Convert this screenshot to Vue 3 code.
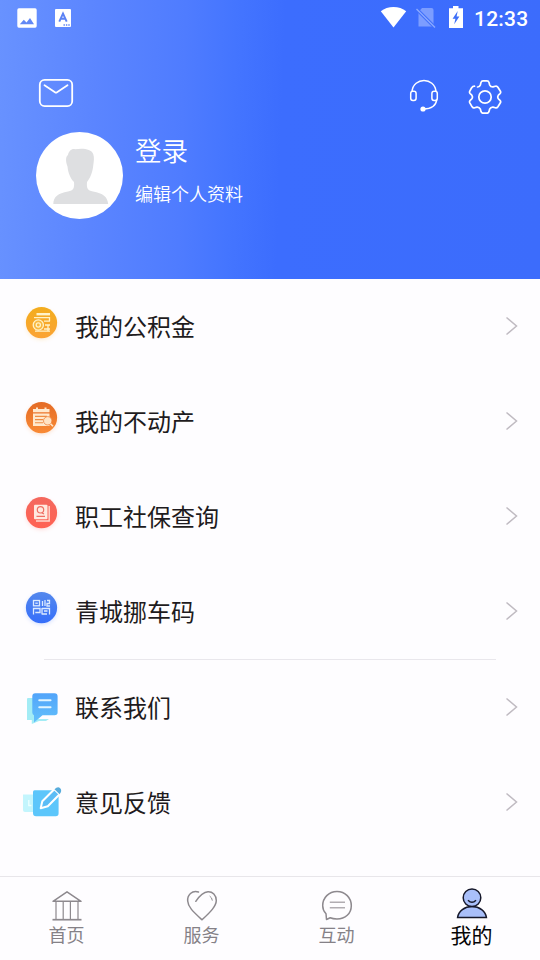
<script setup>
const services = [
  { icon: 'fund', label: '我的公积金' },
  { icon: 'estate', label: '我的不动产' },
  { icon: 'social', label: '职工社保查询' },
  { icon: 'qr', label: '青城挪车码' },
]
const support = [
  { icon: 'contact', label: '联系我们' },
  { icon: 'feedback', label: '意见反馈' },
]
const groups = [services, support]
const tabs = [
  { icon: 'home', label: '首页' },
  { icon: 'service', label: '服务' },
  { icon: 'chat', label: '互动' },
  { icon: 'mine', label: '我的', active: true },
]
</script>

<template>
  <div class="screen">
    <header class="hero">
      <div class="status">
        <svg class="status-left" width="60" height="36" viewBox="0 0 60 36">
          <rect x="1.3" y="8.3" width="19.4" height="19.4" rx="1.6" fill="#fff" />
          <path d="M3.8 24.3 7.8 19.8 10.5 22.5 14 18 18 24.3Z" fill="#6288f5" />
          <rect x="39" y="9" width="16" height="18" rx="1" fill="#fff" />
          <path d="M43.3 21.7 47 13.5 50.7 21.7M44.8 18.8H49.2" fill="none" stroke="#5b82f4" stroke-width="1.9" />
          <path d="M47.5 25H54" stroke="#5b82f4" stroke-width="1.3" stroke-dasharray="1.4 1" />
        </svg>
        <svg class="status-right" width="86" height="36" viewBox="380 0 86 36">
          <path d="M380.8 11.3C387.5 5.6 399.5 5.6 406.2 11.3L393.5 27.6Z" fill="#fff" />
          <path d="M422 8H431.5Q433.5 8 433.5 10V26.5H418.5V12Z" fill="#7c9dff" />
          <path d="M416.5 9 435 27.5" stroke="#3c6dfc" stroke-width="3.2" />
          <path d="M416.5 9 435 27.5" stroke="#8ba8ff" stroke-width="1.5" />
          <path d="M449 8.2H453V6H458.5V8.2H463V28H449Z" fill="#fff" />
          <path d="M457.7 11 452.6 18.7H455.4L454.2 24.3 459.4 16.6H456.6Z" fill="#3d6ff8" />
        </svg>
        <span class="clock">12:33</span>
      </div>
      <div class="tools">
        <svg width="36" height="36" viewBox="38 78 36 36" fill="none" stroke="#fff" stroke-width="1.8" stroke-linecap="round" stroke-linejoin="round">
          <rect x="39.8" y="79.9" width="32.4" height="26.2" rx="4.8" />
          <path d="M44.5 85.3 55 92.3Q56 93 57 92.3L67.5 85.3" />
        </svg>
        <span class="spacer"></span>
        <svg class="headset" width="32" height="36" viewBox="408 78 32 36" fill="none" stroke="#fff" stroke-width="1.5">
          <path d="M412 91.5C413.5 76.8 434.5 76.8 436 91.5" />
          <path d="M436.8 99.5C436 105.5 431 109 423.5 109" />
          <rect x="410.7" y="91.2" width="5.4" height="9.2" rx="2.2" />
          <rect x="431.9" y="91.2" width="5.4" height="9.2" rx="2.2" />
          <circle cx="423" cy="109" r="2.6" fill="#fff" stroke="none" />
        </svg>
        <svg width="36" height="36" viewBox="467 78 36 36" fill="none" stroke="#fff" stroke-width="1.7" stroke-linejoin="round" stroke-linecap="round">
          <path d="M477.5 87Q479.4 87.2 480.4 84.8L481 82.4Q481.5 80.8 483 80.8H487Q488.5 80.8 489 82.4L489.6 84.8Q490.7 87.1 493 86.9L495.3 86.2Q496.9 85.7 497.9 87.2L500.4 91.2Q501.1 92.6 500 93.7L498.4 95.2Q497.1 97 498.4 98.8L500 100.3Q501.1 101.4 500.4 102.8L497.9 106.8Q496.9 108.3 495.3 107.8L493 107.1Q490.7 106.9 489.6 109.2L489 111.6Q488.5 113.2 487 113.2H483Q481.5 113.2 481 111.6L480.4 109.2Q479.3 106.9 477 107.1L474.7 107.8Q473.1 108.3 472.1 106.8L469.8 102.8Q469.1 101.4 470.2 100.3L471.8 98.8Q473.1 97 471.8 95.2L470.2 93.7Q469.1 92.6 469.8 91.2L471.5 88Q472.7 86.2 474.5 86.2" />
          <circle cx="485" cy="97" r="6.2" />
        </svg>
      </div>
      <div class="profile">
        <svg class="avatar" width="87" height="87" viewBox="0 0 87 87">
          <circle cx="43.5" cy="43.5" r="43.5" fill="#fff" />
          <path d="M17.3 72C17.5 64.5 22 61.5 32 59.5 37.5 58.3 38.5 56.5 38 50 34 46 32 40 31.5 34.5 29.5 29 29.5 25 32 23 32.5 19.5 35.5 16.5 39 17.2 46 16 55.5 16.5 57.2 22 58.5 26 57.8 29 57.3 33 56.8 40 54 46.5 51 50 50.5 56.5 51.5 58.3 57 59.5 67 61.5 71.5 64.5 72.2 72Z" fill="#dedfe1" />
        </svg>
        <div class="who">
          <div class="login">登录</div>
          <div class="edit">编辑个人资料</div>
        </div>
      </div>
    </header>

    <main class="menu">
      <section v-for="(group, g) in groups" :key="g" class="group">
        <div v-for="item in group" :key="item.icon" class="row">
          <svg class="row-icon" width="66" height="95" viewBox="0 0 66 95">
            <defs>
              <linearGradient id="g-fund" x2="0" y2="1"><stop stop-color="#f3ad1e" /><stop offset="1" stop-color="#fba334" /></linearGradient>
              <linearGradient id="g-estate" x2="0" y2="1"><stop stop-color="#e46b25" /><stop offset="1" stop-color="#f98a35" /></linearGradient>
              <linearGradient id="g-social" x2="0" y2="1"><stop stop-color="#f4685e" /><stop offset="1" stop-color="#ff6253" /></linearGradient>
              <linearGradient id="g-qr" x2="0" y2="1"><stop stop-color="#5488ed" /><stop offset="1" stop-color="#356efa" /></linearGradient>
              <linearGradient id="g-blue" x2="0" y2="1"><stop stop-color="#52a4fa" /><stop offset="1" stop-color="#62c0fb" /></linearGradient>
            </defs>
            <template v-if="g === 0">
              <circle class="glow" :class="item.icon" cx="41.5" cy="45.2" r="15.3" />
              <circle cx="41.5" cy="43.7" r="15.6" :fill="`url(#g-${item.icon})`" />
            </template>
            <g v-if="item.icon === 'fund'" fill="none" stroke="#fff2c8" stroke-width="1.3">
              <path d="M36.5 35.2H50" stroke-width="2.4" />
              <path d="M34 38.7H49.5V42.2M44 42.2H50M45 46H50M44 50H50M35 52.2H50M48 46V52" />
              <circle cx="38.3" cy="46" r="5.1" fill="#f9b83e" />
              <circle cx="38.3" cy="46" r="2.1" />
            </g>
            <g v-else-if="item.icon === 'estate'">
              <path d="M33 35H36V33.5H38V35H44.5V33.5H46.5V35H49.5V38.2H33ZM33 39.5H49.5V52H33Z" fill="#ffe8cd" />
              <path d="M35 42.4H47M35 45.6H43M35 48.8H43" stroke="#ef8c43" stroke-width="1.1" />
              <circle cx="47.7" cy="46.8" r="4.2" fill="#ffe3c4" stroke="#ef8038" stroke-width=".8" />
              <path d="M50.5 49.7 53 52.3" stroke="#ffe8cd" stroke-width="1.6" />
            </g>
            <g v-else-if="item.icon === 'social'">
              <path d="M49.2 37V52H36" fill="none" stroke="#ffd9cf" stroke-width="1.4" />
              <rect x="34" y="35.7" width="13.5" height="14.6" rx="1" fill="#ffe9df" />
              <circle cx="40.5" cy="40.8" r="3.2" fill="none" stroke="#ef6e62" stroke-width="1.2" />
              <path d="M36.5 47.4H45M41.8 43.7 44 45" stroke="#ef6e62" stroke-width="1.2" />
            </g>
            <g v-else-if="item.icon === 'qr'" fill="none" stroke="#dceaff" stroke-width="1.3">
              <rect x="33.5" y="36.5" width="6" height="5.3" /><path d="M35.3 39.2H37.8" />
              <path d="M42.5 37V42M45 36V42M47 36.5H49.5V39.5H47V42H50" />
              <path d="M33.5 50.5V44.5H40V48.5H35.3M42 44.5H49.5V50.5M42 44V50.5M44 47H47.5M42 50H47" />
            </g>
            <g v-else-if="item.icon === 'contact'">
              <path d="M27 39Q27 38 28 38H34V59H49L46 61H39L31.8 64V60H27Z" fill="#a3ecf5" />
              <path d="M35.3 33.2H54.5Q57.6 33.2 57.6 36.2V52.5Q57.6 55.3 54.5 55.3H42.5L34 62.5V55.3Q32.3 54.8 32.3 52.5V36.2Q32.3 33.2 35.3 33.2Z" fill="url(#g-blue)" />
              <path d="M39.3 40.2H50.5M39.3 47.2H50.5" stroke="#e1f5ff" stroke-width="2.1" stroke-linecap="round" />
            </g>
            <g v-else>
              <path d="M23 39.5H34V57H25Q23 57 23 55Z" fill="#c3f5fd" />
              <path d="M28.8 45V50.5H31.5" fill="none" stroke="#eeffff" stroke-width="1.3" />
              <path d="M34.5 35.2H58.6V58Q58.6 61.3 55.8 61.3H36Q33 61.3 33 58V37Q33 35.2 34.5 35.2Z" fill="#5cc6fb" />
              <path d="M40.7 53.3 42.3 46.3 54.3 34.2 59.6 39.2 47.8 51.3Z" fill="#5bbdf6" stroke="#fff" stroke-width="2" stroke-linejoin="round" />
              <path d="M54.5 34.3Q57.8 30.8 60.2 33.2 62.5 35.8 59.6 39.2Z" fill="#58acdc" />
            </g>
          </svg>
          <span class="label">{{ item.label }}</span>
          <svg class="chevron" width="14" height="20" viewBox="0 0 14 20">
            <path d="M1.5 1.5 11.5 10 1.5 18.5" fill="none" stroke="#c0bbc2" stroke-width="1.5" />
          </svg>
        </div>
      </section>
    </main>

    <nav class="tabs">
      <div v-for="tab in tabs" :key="tab.icon" class="tab" :class="{ active: tab.active }">
        <svg width="36" height="36" viewBox="0 0 36 36" fill="none" stroke="#8d898e" stroke-width="1.5">
          <g v-if="tab.icon === 'home'">
            <path d="M4 14.3 18 4.8 32 14.3Z" stroke-linejoin="round" />
            <path d="M3.5 32.7H32.5" stroke-width="1.7" />
            <path d="M7 15V32M14.2 15V32M21.4 15V32M29 15V32" stroke-width="1.2" />
          </g>
          <g v-else-if="tab.icon === 'service'" stroke-linecap="round">
            <path d="M14.5 5C8 3 3.2 8 3.7 14 4 20 9 24.5 18 32.8 27 24.5 32.2 19 32.3 13.5 32.3 8 28.5 4.5 24 4.7 19 5 16 8 11.8 14.3" />
            <path d="M26 9.3Q28 10.5 28.3 13.2" stroke-width="1" />
          </g>
          <g v-else-if="tab.icon === 'chat'" stroke-linejoin="round">
            <path d="M7.5 32.5 7 26.8C4.8 24.5 3.7 21.5 3.7 18.7 3.7 10.8 9.8 4.5 18 4.5S32.3 10.8 32.3 18.7 26.3 32 18 32C15.2 32 13 31.6 11.2 30.8Z" />
            <path d="M10.8 15.2H26M10.8 20.7H26" stroke="#b1adb2" />
          </g>
          <g v-else stroke="#16182b" stroke-width="1.5">
            <path d="M3.6 30.4C4.5 24 10.5 19.6 18 19.6S31.5 24 32.4 30.4Z" fill="#a9bffa" />
            <circle cx="18" cy="10.7" r="8.8" fill="#a9bffa" />
            <path d="M14 13.2Q18 17.4 22 13.2" />
          </g>
        </svg>
        <span>{{ tab.label }}</span>
      </div>
    </nav>
  </div>
</template>

<style>
body {
  margin: 0;
  background: #fefdff;
}
</style>

<style scoped>
.screen {
  display: flex;
  flex-direction: column;
  width: 540px;
  height: 960px;
  overflow: hidden;
  background: #fefdff;
  font-family: "Noto Sans CJK SC", sans-serif;
}
.hero {
  height: 279px;
  flex: none;
  background: linear-gradient(92deg, #6892ff 0%, #5b85ff 18%, #4f7cff 34%, #4475ff 43%, #3c6dfe 52%, #3c6cfc 100%);
  color: #fff;
}
.status {
  display: flex;
  height: 36px;
  padding: 0 12px 0 16px;
}
.status-right {
  margin-left: auto;
}
.clock {
  width: 54px;
  margin-left: 8px;
  font: 500 21px/38px Roboto, sans-serif;
  letter-spacing: 0.2px;
}
.tools {
  display: flex;
  padding: 42px 37px 0 38px;
}
.spacer {
  flex: 1;
}
.headset {
  margin-right: 27px;
}
.profile {
  display: flex;
  padding: 18px 36px 0;
}
.who {
  margin-left: 12px;
}
.login {
  font-size: 26.5px;
  font-weight: 350;
  line-height: 36px;
}
.edit {
  margin-top: 12px;
  font-size: 18px;
  font-weight: 350;
  line-height: 26px;
}
.menu {
  flex: 1;
}
.group + .group::before {
  content: "";
  display: block;
  height: 1px;
  margin: 0 44px;
  background: #e9e7ec;
}
.row {
  display: flex;
  align-items: center;
  height: 95px;
  padding-right: 21px;
}
.row-icon {
  flex: none;
}
.glow {
  opacity: 0.25;
  filter: blur(2px);
}
.glow.fund { fill: #f9b83e; }
.glow.estate { fill: #f98a35; }
.glow.social { fill: #ff7365; }
.glow.qr { fill: #4b80ff; }
.label {
  flex: 1;
  margin-left: 9px;
  padding-bottom: 2px;
  color: #1e1b20;
  font-size: 24px;
  line-height: 36px;
}
.chevron {
  margin-bottom: 1px;
}
.tabs {
  display: flex;
  height: 83px;
  border-top: 1px solid #e8e6ea;
}
.tab {
  display: flex;
  flex: 1;
  flex-direction: column;
  align-items: center;
  padding: 10px 2px 0 0;
  color: #858187;
  font-size: 18px;
  line-height: 22px;
}
.tab svg {
  flex: none;
}
.tab.active {
  color: #050506;
  font-size: 21px;
}
</style>
